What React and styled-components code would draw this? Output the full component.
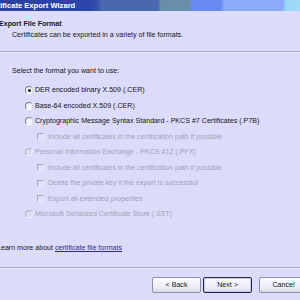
import React from "react";
import styled, { createGlobalStyle, css } from "styled-components";

const Global = createGlobalStyle`
  html, body { margin: 0; padding: 0; background: #dcdcfa; }
  body { width: 300px; height: 300px; overflow: hidden; }
  #root { width: 300px; height: 300px; overflow: hidden; }
`;

const Window = styled.div`
  width: 340px;
  height: 300px;
  margin-left: -20px;
  background: #dcdcfa;
  display: flex;
  flex-direction: column;
  font-family: "Liberation Sans", Arial, sans-serif;
  font-size: 7.1px;
  color: #141420;
`;

const TitleBar = styled.div`
  height: 11px;
  line-height: 11px;
  padding-left: 5px;
  color: #ffffff;
  font-weight: bold;
  font-size: 7.6px;
  background: linear-gradient(
    to right,
    #2a3f9e 0px,
    #2c46aa 110px,
    #3a50a8 118px,
    #4a68b0 121px,
    #4a68b0 178px,
    #6b8ea8 181px,
    #6b8ea8 209px,
    #6a8af0 212px,
    #6a8af2 241px,
    #8aacf8 244px,
    #8aacf8 303px,
    #9ad6f8 306px,
    #a6e4fa 340px
  );
`;

const Header = styled.div`
  height: 40px;
  box-sizing: border-box;
  padding: 8px 0 0 19px;
`;

const HeaderTitle = styled.div`
  font-weight: bold;
  line-height: 10px;
  height: 10px;
`;

const HeaderDesc = styled.div`
  line-height: 10px;
  height: 10px;
  margin-left: 13px;
  margin-top: 1px;
`;

const Separator = styled.div`
  height: 1px;
  background: #a6a6c2;
  border-bottom: 1px solid #f2f2ff;
`;

const Body = styled.div`
  flex: 1;
  padding: 13px 0 0 32px;
  display: flex;
  flex-direction: column;
`;

const Prompt = styled.div`
  line-height: 10px;
  height: 10px;
`;

const Options = styled.div`
  margin-top: 9px;
  display: flex;
  flex-direction: column;
  gap: 5.5px;
`;

const Row = styled.div`
  height: 10px;
  line-height: 10px;
  display: flex;
  align-items: center;
  padding-left: ${(p) => p.$indent}px;
  color: ${(p) => (p.$disabled ? "#a2a2b4" : "#141420")};
  white-space: nowrap;
`;

const RadioCircle = styled.span`
  width: 8px;
  height: 8px;
  box-sizing: border-box;
  border-radius: 50%;
  border: 1px solid;
  border-color: ${(p) =>
    p.$disabled ? "#b4b4c4 #e8e8f8 #f4f4ff #b4b4c4" : "#7c7c90 #d8d8ea #ffffff #7c7c90"};
  background: ${(p) => (p.$disabled ? "#dcdcf4" : "#f6f6ff")};
  display: flex;
  align-items: center;
  justify-content: center;
  margin-right: 2px;
  flex: none;
  &::after {
    content: "";
    width: 3px;
    height: 3px;
    border-radius: 50%;
    background: #101018;
    display: ${(p) => (p.$checked ? "block" : "none")};
  }
`;

const CheckBox = styled.span`
  width: 7px;
  height: 7px;
  box-sizing: border-box;
  border: 1px solid;
  border-color: #a8a8b8 #ececfa #ececfa #a8a8b8;
  background: #dedef4;
  margin-right: 4px;
  flex: none;
`;

const LearnMore = styled.div`
  margin-top: 24px;
  margin-left: -15px;
  line-height: 10px;
  height: 10px;
`;

const Link = styled.a`
  color: #2a2a8c;
  text-decoration: underline;
`;

const Footer = styled.div`
  height: 31px;
  box-sizing: border-box;
  display: flex;
  justify-content: flex-end;
  align-items: flex-start;
  padding: 8px 12px 0 0;
`;

const Button = styled.button`
  width: 49px;
  height: 16px;
  box-sizing: border-box;
  padding: 0;
  font-family: inherit;
  font-size: 7.1px;
  color: #141420;
  border-radius: 2px;
  background: linear-gradient(to bottom, #fafaff, #ececf6 70%, #dadae8);
  border: 1px solid #8e8eaa;
  margin-left: ${(p) => p.$gap}px;
  ${(p) =>
    p.$default &&
    css`
      border: 1px solid #24243a;
      box-shadow: inset 0 0 0 1px #c4c8f0;
    `}
`;

function Radio({ checked, disabled, indent = 13, children }) {
  return (
    <Row $indent={indent} $disabled={disabled}>
      <RadioCircle $checked={checked} $disabled={disabled} />
      <span>{children}</span>
    </Row>
  );
}

function Check({ children }) {
  return (
    <Row $indent={25} $disabled>
      <CheckBox />
      <span>{children}</span>
    </Row>
  );
}

export default function App() {
  return (
    <>
      <Global />
      <Window>
        <TitleBar>Certificate Export Wizard</TitleBar>
        <Header>
          <HeaderTitle>Export File Format</HeaderTitle>
          <HeaderDesc>Certificates can be exported in a variety of file formats.</HeaderDesc>
        </Header>
        <Separator />
        <Body>
          <Prompt>Select the format you want to use:</Prompt>
          <Options>
            <Radio checked>DER encoded binary X.509 (.CER)</Radio>
            <Radio>Base-64 encoded X.509 (.CER)</Radio>
            <Radio>Cryptographic Message Syntax Standard - PKCS #7 Certificates (.P7B)</Radio>
            <Check>Include all certificates in the certification path if possible</Check>
            <Radio disabled>Personal Information Exchange - PKCS #12 (.PFX)</Radio>
            <Check>Include all certificates in the certification path if possible</Check>
            <Check>Delete the private key if the export is successful</Check>
            <Check>Export all extended properties</Check>
            <Radio disabled>Microsoft Serialized Certificate Store (.SST)</Radio>
          </Options>
          <LearnMore>
            Learn more about <Link href="#">certificate file formats</Link>
          </LearnMore>
        </Body>
        <Separator />
        <Footer>
          <Button>&lt; Back</Button>
          <Button $default $gap={2}>Next &gt;</Button>
          <Button $gap={7}>Cancel</Button>
        </Footer>
      </Window>
    </>
  );
}
